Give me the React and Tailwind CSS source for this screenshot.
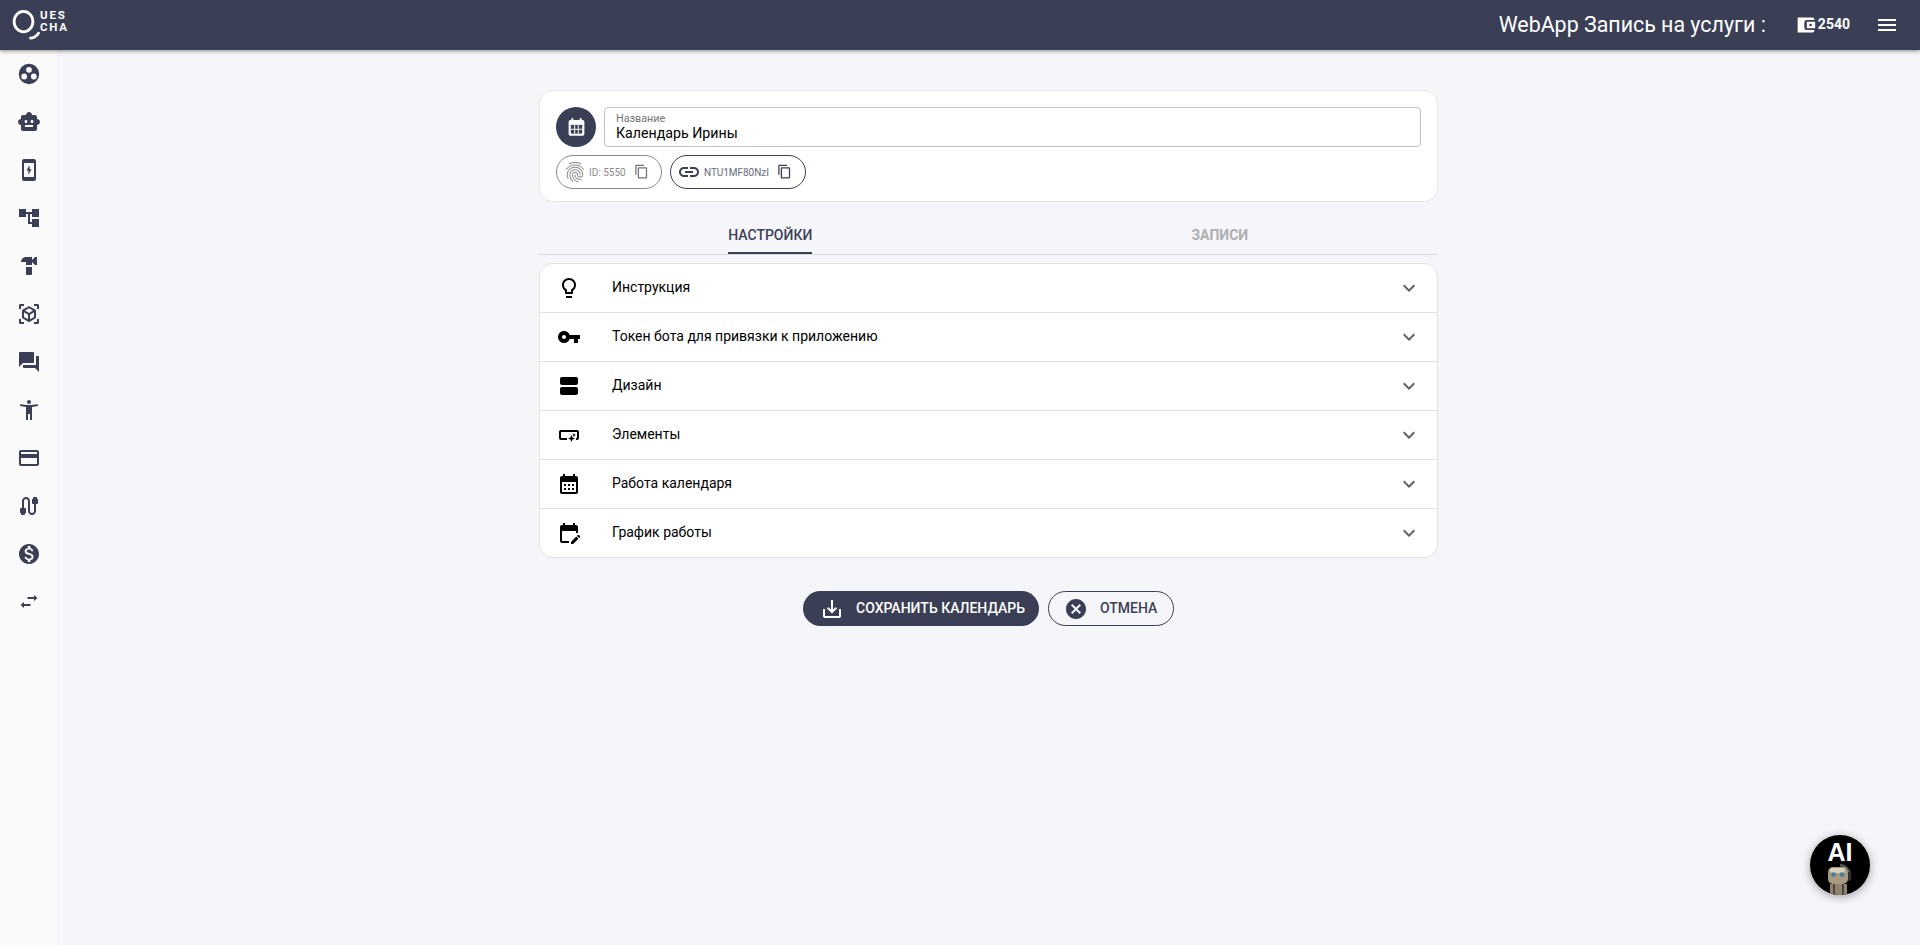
import React from "react";
import {
  MdSmartToy, MdAccountTree, MdHardware, MdViewInAr, MdForum, MdAccessibilityNew,
  MdOutlineCreditCard, MdCable, MdMonetizationOn, MdLightbulbOutline, MdVpnKey, MdViewAgenda,
  MdSmartButton, MdCalendarMonth, MdEditCalendar, MdExpandMore, MdSaveAlt, MdCancel, MdContentCopy,
  MdFingerprint, MdLink, MdMenu,
} from "react-icons/md";

function Dots(props) {
  return (
    <svg viewBox="0 0 24 24" fill="currentColor" {...props}>
      <path fillRule="evenodd" d="M12 1.8a10.2 10.2 0 1 0 0 20.4 10.2 10.2 0 0 0 0-20.4zM12 4.9a2.9 2.9 0 1 1 0 5.8 2.9 2.9 0 0 1 0-5.8zM7.2 11.6a2.9 2.9 0 1 1 0 5.8 2.9 2.9 0 0 1 0-5.8zM16.8 11.6a2.9 2.9 0 1 1 0 5.8 2.9 2.9 0 0 1 0-5.8z" />
    </svg>
  );
}

function PhoneBolt(props) {
  return (
    <svg viewBox="0 0 24 24" fill="currentColor" {...props}>
      <path fillRule="evenodd" d="M17 1.01 7 1C5.9 1 5 1.9 5 3v18c0 1.1.9 2 2 2h10c1.1 0 2-.9 2-2V3c0-1.1-.9-1.99-2-1.99zM17 19H7V5h10v14z" />
      <path d="M12.6 7.2 9.4 12.6h2v4.2l3.2-5.6h-2z" />
    </svg>
  );
}

function Arrows(props) {
  return (
    <svg viewBox="0 0 24 24" fill="currentColor" {...props}>
      <path d="M10.5 7.1H17V5l3.5 3-3.5 3V8.9h-6.5z" />
      <path d="M13.5 14.1H7V12l-3.5 3L7 18v-2.1h6.5z" />
    </svg>
  );
}

function CalendarGrid(props) {
  return (
    <svg viewBox="0 0 24 24" {...props}>
      <rect x="6" y="1.5" width="2.4" height="4" fill="#fff" />
      <rect x="15.6" y="1.5" width="2.4" height="4" fill="#fff" />
      <rect x="3" y="3.5" width="18" height="18" rx="2" fill="#fff" />
      <rect x="5.5" y="9" width="13" height="10" fill="#3b3f56" />
      <rect x="9.4" y="9" width="1.1" height="10" fill="#fff" />
      <rect x="13.5" y="9" width="1.1" height="10" fill="#fff" />
      <rect x="5.5" y="13.5" width="13" height="1.1" fill="#fff" />
    </svg>
  );
}

function Wallet(props) {
  return (
    <svg viewBox="0 0 24 24" fill="currentColor" {...props}>
      <path fillRule="evenodd" d="M2 3h18a2 2 0 0 1 2 2v1h-9a3 3 0 0 0-3 3v6a3 3 0 0 0 3 3h9v1a2 2 0 0 1-2 2H2zM13 8h10v8H13zm4.5 2.4a1.6 1.6 0 1 0 0 3.2 1.6 1.6 0 0 0 0-3.2z" />
    </svg>
  );
}

const side = [Dots, MdSmartToy, PhoneBolt, MdAccountTree, MdHardware, MdViewInAr, MdForum, MdAccessibilityNew, MdOutlineCreditCard, MdCable, MdMonetizationOn, Arrows];

const rows = [
  [MdLightbulbOutline, "Инструкция"],
  [MdVpnKey, "Токен бота для привязки к приложению"],
  [MdViewAgenda, "Дизайн"],
  [MdSmartButton, "Элементы"],
  [MdCalendarMonth, "Работа календаря"],
  [MdEditCalendar, "График работы"],
];

function Logo() {
  return (
    <div className="flex items-start h-[50px]">
      <svg viewBox="0 0 28 50" className="w-[28px] h-[50px] shrink-0">
        <ellipse cx="11.5" cy="21.6" rx="9.4" ry="10.2" fill="none" stroke="#fff" strokeWidth="2.8" />
        <path d="M18.5 38.2c3.2-.3 6-2 8-5" fill="none" stroke="#fff" strokeWidth="2.8" strokeLinecap="round" />
      </svg>
      <div className="mt-[10px] text-white font-bold text-[11.5px] leading-[11.5px] tracking-[1.8px]">
        <div>UES</div>
        <div>CHA</div>
      </div>
    </div>
  );
}

function Robot() {
  return (
    <svg viewBox="0 0 60 60" className="absolute inset-0 w-full h-full">
      <rect x="20" y="49" width="17" height="12" fill="#8f8370" />
      <rect x="23" y="49" width="2" height="12" fill="#4d453a" />
      <rect x="32" y="49" width="2" height="12" fill="#4d453a" />
      <path d="M30 30a11 11 0 0 1 10 10" fill="none" stroke="#55585c" strokeWidth="2.5" />
      <rect x="37" y="37" width="4" height="9" rx="2" fill="#2e3033" />
      <rect x="18" y="32" width="20" height="17" rx="5" fill="#a89a82" />
      <rect x="20" y="33" width="15" height="5" rx="2.5" fill="#d9cfba" />
      <circle cx="23.5" cy="39.5" r="2.3" fill="#3f7f99" />
      <circle cx="32" cy="39.5" r="2.3" fill="#3f7f99" />
    </svg>
  );
}

export default function App() {
  return (
    <div className="relative min-h-[945px] bg-[#f5f6fa] font-['Roboto',sans-serif] flex flex-col">
      <header className="relative z-10 h-[50px] bg-[#3b3f56] shadow-[0_1px_4px_rgba(0,0,0,0.45)] flex items-center pl-[12px] pr-[21px] text-white">
        <Logo />
        <div className="ml-auto text-[21.4px] leading-none">WebApp Запись на услуги :</div>
        <Wallet className="w-[20px] h-[20px] ml-[30px]" />
        <div className="ml-[2px] text-[14px] font-bold leading-none -mt-[2px]">2540</div>
        <MdMenu className="w-[24px] h-[24px] ml-[25px]" />
      </header>
      <div className="flex flex-1">
        <aside className="w-[57px] bg-[#fafafa] flex flex-col items-center text-[#3b3f56] shrink-0">
          {side.map((Icon, i) => (
            <div key={i} className="h-[48px] flex items-center justify-center">
              <Icon className="w-[24px] h-[24px]" />
            </div>
          ))}
        </aside>
        <main className="flex-1 flex flex-col items-center pt-[40px]">
          <div className="w-[899px]">
            <section className="bg-white border border-[#e6e7ec] rounded-[14px] pt-[16px] pb-[12px] px-[16px]">
              <div className="flex gap-[8px]">
                <div className="w-[40px] h-[40px] rounded-full bg-[#3b3f56] flex items-center justify-center shrink-0">
                  <CalendarGrid className="w-[21px] h-[21px]" />
                </div>
                <div className="flex-1 h-[40px] border border-[#c0c0c0] rounded-[4px] pl-[11px] pt-[4px]">
                  <div className="text-[10.8px] leading-[13px] text-[#757575]">Название</div>
                  <div className="text-[14.2px] leading-[16px] text-black">Календарь Ирины</div>
                </div>
              </div>
              <div className="flex gap-[8px] mt-[8px]">
                <div className="h-[34px] w-[106px] border border-[#8a8a8a] rounded-full flex items-center pl-[6px] text-[#8a8a8a]">
                  <MdFingerprint className="w-[24px] h-[24px] shrink-0" />
                  <span className="ml-[2px] text-[10px]">ID: 5550</span>
                  <MdContentCopy className="w-[15px] h-[15px] ml-[8px] -mt-[2px] text-[#707070]" />
                </div>
                <div className="h-[34px] w-[136px] border border-[#3b3f56] rounded-full flex items-center pl-[6px] text-[#3b3f56]">
                  <MdLink className="w-[24px] h-[24px] shrink-0" />
                  <span className="ml-[3px] text-[10px] tracking-[-0.05px] text-[#666a7a]">NTU1MF80NzI</span>
                  <MdContentCopy className="w-[15px] h-[15px] ml-[8px] -mt-[2px]" />
                </div>
              </div>
            </section>

            <nav className="flex h-[53px] border-b border-[#d8d9e0] mb-[8px]">
              <div className="flex-1 pl-[13px] flex justify-center">
                <div className="relative h-[52px] pt-[15px] flex items-center text-[14px] font-medium text-[#3b3f56] uppercase">
                  Настройки
                  <div className="absolute bottom-0 left-0 right-0 h-[2px] bg-[#3b3f56]" />
                </div>
              </div>
              <div className="flex-1 pl-[13px] pt-[15px] flex justify-center items-center pb-[1px] text-[14px] font-bold text-[#aeaeae] uppercase">
                Записи
              </div>
            </nav>

            <section className="bg-white border border-[#e2e3e8] rounded-[14px] overflow-hidden">
              {rows.map(([Icon, label], i) => (
                <div key={label} className={`flex items-center pl-[17px] pr-[16px] ${i < 5 ? "h-[49px] border-b border-[#e0e0e0]" : "h-[48px]"}`}>
                  <Icon className="w-[24px] h-[24px] text-black shrink-0" />
                  <div className="ml-[31px] -mt-[1px] text-[14px] text-black flex-1">{label}</div>
                  <MdExpandMore className="w-[24px] h-[24px] text-[#5f6368]" />
                </div>
              ))}
            </section>

            <div className="flex justify-center gap-[9px] mt-[33px]">
              <button className="h-[35px] w-[236px] rounded-full bg-[#3b3f56] text-white flex items-center pl-[17px] text-[14px] font-medium uppercase">
                <MdSaveAlt className="w-[24px] h-[24px]" />
                <span className="ml-[12px]">Сохранить календарь</span>
              </button>
              <button className="h-[35px] w-[126px] rounded-full border border-[#3b3f56] text-[#3b3f56] flex items-center pl-[15px] text-[14px] font-medium uppercase">
                <MdCancel className="w-[24px] h-[24px]" />
                <span className="ml-[12px]">Отмена</span>
              </button>
            </div>
          </div>
        </main>
      </div>
      <div className="absolute left-[1810px] top-[835px] w-[60px] h-[60px] rounded-full bg-black shadow-[0_2px_10px_rgba(0,0,0,0.35)] overflow-hidden">
        <Robot />
        <div className="absolute inset-x-0 top-[3px] text-center text-white font-bold text-[25px] leading-[28px] font-['Liberation_Sans',sans-serif]">AI</div>
      </div>
    </div>
  );
}
